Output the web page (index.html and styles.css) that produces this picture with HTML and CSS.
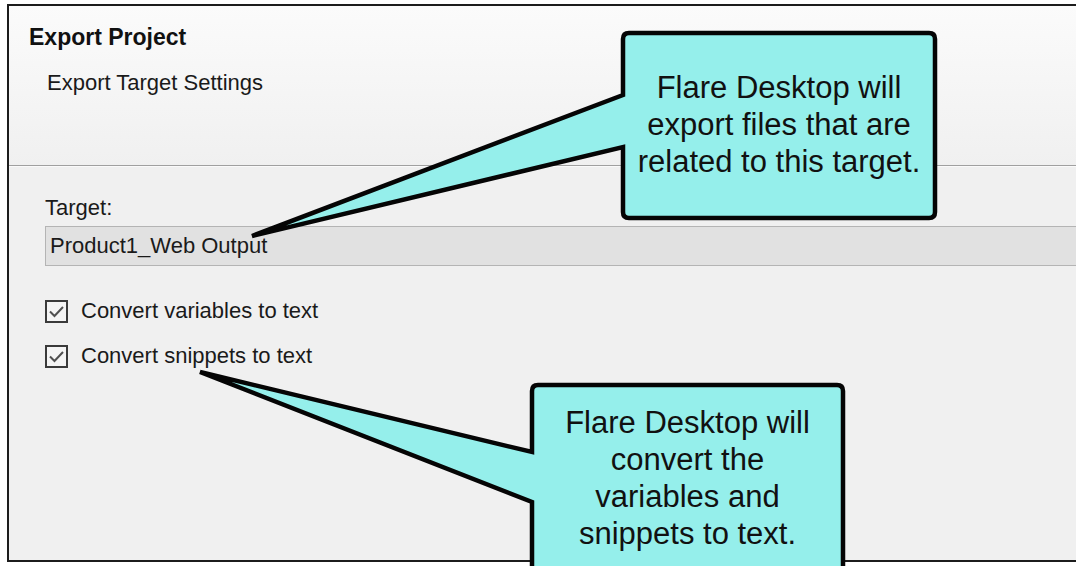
FILE: index.html
```html
<!DOCTYPE html>
<html lang="en">
<head>
    <meta charset="UTF-8">
    <title>Export Project</title>
    <link rel="stylesheet" href="styles.css">
</head>
<body>
    <div class="dialog">
        <div class="dialog-header">
            <h1>Export Project</h1>
            <p class="subtitle">Export Target Settings</p>
        </div>

        <div class="dialog-body">
            <label class="field-label" for="target">Target:</label>
            <div class="target-box" id="target">Product1_Web Output</div>

            <div class="check-row">
                <span class="checkbox">
                    <svg width="19" height="19" viewBox="0 0 19 19"><path d="M3 9.5 L7.5 14 L16 5" fill="none" stroke="#505050" stroke-width="2"/></svg>
                </span>
                <span class="check-label">Convert variables to text</span>
            </div>
            <div class="check-row">
                <span class="checkbox">
                    <svg width="19" height="19" viewBox="0 0 19 19"><path d="M3 9.5 L7.5 14 L16 5" fill="none" stroke="#505050" stroke-width="2"/></svg>
                </span>
                <span class="check-label">Convert snippets to text</span>
            </div>
        </div>
    </div>

    <!-- callouts drawn over the dialog -->
    <div class="callouts">
        <svg width="1076" height="566" viewBox="0 0 1076 566">
            <path class="bubble" d="M629 33 H929 Q935 33 935 39 V212 Q935 218 929 218 H629 Q623 218 623 212 V147 L252 236 L623 95 V39 Q623 33 629 33 Z"/>
            <path class="bubble" d="M538 385 H837 Q843 385 843 391 V572 H532 V502 L200 372 L532 452 V391 Q532 385 538 385 Z"/>
        </svg>
        <div class="callout-text callout-one">Flare Desktop will<br>export files that are<br>related to this target.</div>
        <div class="callout-text callout-two">Flare Desktop will<br>convert the<br>variables and<br>snippets to text.</div>
    </div>
</body>
</html>
```

FILE: styles.css
```css
body {
    margin: 0;
    background-color: #fff;
    font-family: "Liberation Sans", Arial, sans-serif;
    color: #1a1a1a;
    overflow: hidden;
    position: relative;
    width: 1076px;
    height: 566px;
}

.dialog {
    margin: 4px 0 0 7px;
    height: 554px;
    border: 2px solid #1c1c1c;
    border-right: none;
    background-color: #f0f0f0;
}

.dialog-header {
    height: 160px;
    padding: 18px 0 0 20px;
    box-sizing: border-box;
    background: linear-gradient(to bottom, #fbfbfb, #f0f0f0);
    border-bottom: 1px solid #a0a0a0;
    box-shadow: 0 1px 0 #fafafa;
}

.dialog-header h1 {
    margin: 0;
    font-size: 23px;
    line-height: 26px;
    font-weight: bold;
    color: #111;
}

.subtitle {
    margin: 20px 0 0 18px;
    font-size: 22px;
    line-height: 26px;
}

.dialog-body {
    padding: 29px 0 0 36px;
    font-size: 22px;
}

.field-label {
    display: block;
    line-height: 26px;
    margin-bottom: 5px;
}

.target-box {
    height: 38px;
    line-height: 38px;
    padding-left: 4px;
    background-color: #e1e1e1;
    border: 1px solid #b4b4b4;
    border-right: none;
    margin-bottom: 32px;
}

.check-row {
    display: flex;
    align-items: center;
    gap: 13px;
    height: 26px;
    margin-bottom: 19px;
}

.checkbox {
    width: 19px;
    height: 19px;
    border: 2px solid #3a3a3a;
    background-color: #f4f4f4;
    display: flex;
}

.check-label {
    line-height: 26px;
}

.callouts {
    position: absolute;
    top: 0;
    left: 0;
    width: 1076px;
    height: 566px;
}

.callouts svg {
    display: block;
}

.bubble {
    fill: #95efeb;
    stroke: #050505;
    stroke-width: 4.5;
    stroke-linejoin: miter;
}

.callout-text {
    position: absolute;
    text-align: center;
    font-family: "Liberation Sans", Arial, sans-serif;
    font-size: 31px;
    line-height: 37px;
    color: #111;
}

.callout-one {
    left: 623px;
    width: 312px;
    top: 69px;
}

.callout-two {
    left: 532px;
    width: 311px;
    top: 404px;
}
```
